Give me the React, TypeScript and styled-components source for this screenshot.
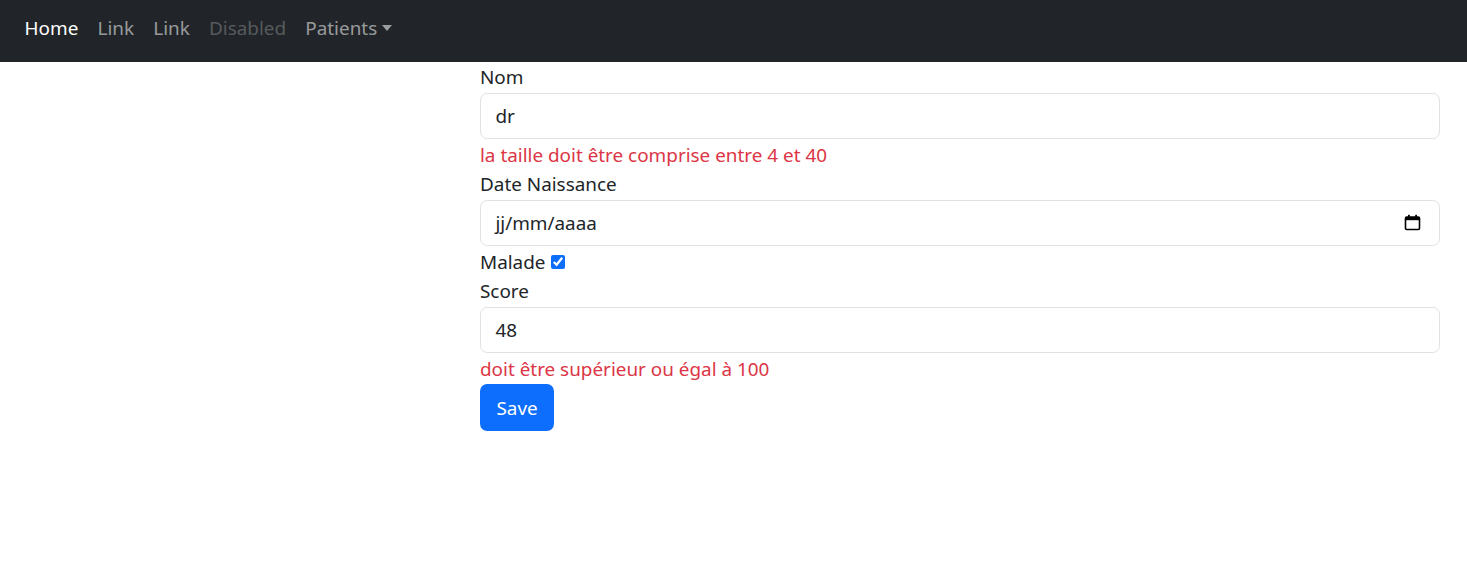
import { createGlobalStyle } from 'styled-components';
import styled from 'styled-components';

const GlobalStyle = createGlobalStyle`
  body {
    margin: 0;
    background: #fff;
    font-family: 'Noto Sans', 'Open Sans', sans-serif;
    font-size: 18.9px;
    line-height: 1.5;
    color: #212529;
  }
  * { box-sizing: border-box; }
`;

const NavBar = styled.nav({
  height: 62,
  background: '#212529',
  display: 'flex',
  alignItems: 'center',
  padding: '0 15px 6px',
});

const NavItem = styled.a<{ $state?: 'active' | 'disabled' }>((props) => ({
  padding: '0 9.6px',
  fontSize: 18.9,
  lineHeight: '28px',
  textDecoration: 'none',
  display: 'flex',
  alignItems: 'center',
  color:
    props.$state === 'active'
      ? '#ffffff'
      : props.$state === 'disabled'
        ? 'rgba(255,255,255,0.25)'
        : 'rgba(255,255,255,0.55)',
}));

const Caret = styled.span({
  display: 'inline-block',
  marginLeft: 5,
  width: 0,
  height: 0,
  borderTop: '6px solid rgba(255,255,255,0.55)',
  borderLeft: '5.5px solid transparent',
  borderRight: '5.5px solid transparent',
});

const Main = styled.main({
  padding: '0 27px 0 480px',
});

const Form = styled.form({
  display: 'flex',
  flexDirection: 'column',
});

const Label = styled.label<{ $gap?: number }>((props) => ({
  display: 'flex',
  alignItems: 'center',
  marginTop: props.$gap ?? 0,
  lineHeight: '29.5px',
}));

const Input = styled.input({
  height: 46,
  width: '100%',
  padding: '7px 14.4px',
  fontFamily: 'inherit',
  fontSize: 18.9,
  color: '#212529',
  border: '1px solid #dee2e6',
  borderRadius: 7.2,
  outline: 'none',
});

const FakeDate = styled.div({
  height: 46,
  display: 'flex',
  alignItems: 'center',
  justifyContent: 'space-between',
  padding: '2px 18px 0 14.4px',
  border: '1px solid #dee2e6',
  borderRadius: 7.2,
  color: '#212529',
});

const Feedback = styled.div({
  color: '#dc3545',
  marginTop: 2.5,
  lineHeight: '29px',
});

const Check = styled.input({
  width: 14,
  height: 14,
  margin: '0 0 0 6px',
  accentColor: '#0d6efd',
});

const SaveButton = styled.button({
  alignSelf: 'flex-start',
  height: 47,
  padding: '0 16.5px',
  background: '#0d6efd',
  color: '#fff',
  border: 'none',
  borderRadius: 7.2,
  fontFamily: 'inherit',
  fontSize: 18.9,
});

const CalendarIcon = () => (
  <svg width="17" height="17" viewBox="0 0 17 17" style={{ marginTop: -2 }}>
    <rect x="1.5" y="3" width="14" height="12.5" rx="1.2" fill="none" stroke="#000" strokeWidth="1.6" />
    <rect x="1.5" y="3" width="14" height="3.2" fill="#000" />
    <rect x="4" y="0.8" width="1.8" height="3" fill="#000" />
    <rect x="11.2" y="0.8" width="1.8" height="3" fill="#000" />
  </svg>
);

export default function App() {
  return (
    <>
      <GlobalStyle />
      <NavBar>
        <NavItem $state="active">Home</NavItem>
        <NavItem>Link</NavItem>
        <NavItem>Link</NavItem>
        <NavItem $state="disabled">Disabled</NavItem>
        <NavItem>
          Patients
          <Caret />
        </NavItem>
      </NavBar>
      <Main>
        <Form onSubmit={(e) => e.preventDefault()}>
          <Label $gap={1}>Nom</Label>
          <Input defaultValue="dr" />
          <Feedback>la taille doit être comprise entre 4 et 40</Feedback>
          <Label>Date Naissance</Label>
          <FakeDate>
            <span>jj/mm/aaaa</span>
            <CalendarIcon />
          </FakeDate>
          <Label $gap={2}>
            Malade
            <Check type="checkbox" defaultChecked />
          </Label>
          <Label>Score</Label>
          <Input defaultValue="48" />
          <Feedback>doit être supérieur ou égal à 100</Feedback>
          <SaveButton type="submit">Save</SaveButton>
        </Form>
      </Main>
    </>
  );
}
